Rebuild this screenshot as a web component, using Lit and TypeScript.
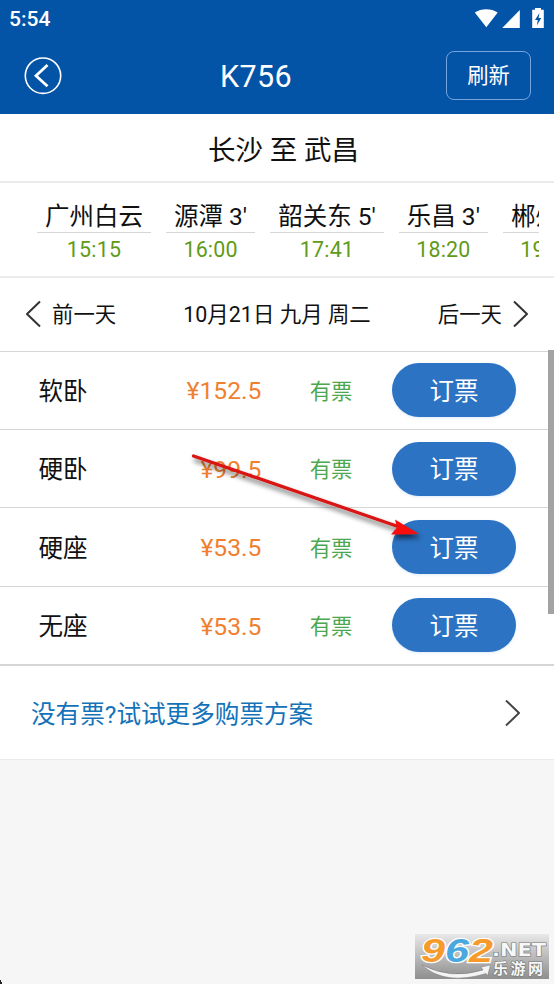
import { LitElement, html, css, svg } from "lit";
import { customElement, property } from "lit/decorators.js";

const chevron = (dir: "left" | "right") => svg`
  <path d=${dir === "left" ? "M15 1.5 L2 14 L15 26.5" : "M2 1.5 L15 14 L2 26.5"}
    fill="none" stroke="currentColor" stroke-width="2" stroke-linejoin="round"></path>`;

@customElement("seat-row")
class SeatRow extends LitElement {
  @property() name = "";
  @property() price = "";

  static styles = css`
    :host {
      box-sizing: border-box;
      height: 78.4px;
      display: grid;
      grid-template-columns: 120px 103px 91px 1fr;
      align-items: center;
      padding: 0 38px 0 38.5px;
      border-bottom: 1.5px solid #d6d6d6;
      background: #fff;
    }
    .name { font-size: 24.5px; color: #111; padding-top: 3px; }
    .price { font-size: 24.7px; color: #f08030; text-align: right; white-space: nowrap; padding-top: 2px; }
    .left { font-size: 21.4px; color: #4ca850; text-align: right; padding-top: 3px; }
    .book {
      justify-self: end;
      box-sizing: border-box;
      width: 124px;
      height: 54px;
      border: 0;
      border-radius: 27px;
      background: #2c73c3;
      color: #fff;
      font: inherit;
      font-size: 24.5px;
      padding: 3px 0 0;
      box-shadow: 0 1px 3px #2c73c326;
    }
  `;

  render() {
    return html`
      <span class="name">${this.name}</span>
      <span class="price">¥${this.price}</span>
      <span class="left">有票</span>
      <button class="book">订票</button>
    `;
  }
}

@customElement("app-root")
class AppRoot extends LitElement {
  static styles = css`
    :host {
      display: flex;
      flex-direction: column;
      position: relative;
      box-sizing: border-box;
      width: 554px;
      height: 984px;
      overflow: hidden;
      background: #f6f6f6;
      color: #111;
      font-family: Roboto, "Noto Sans CJK SC", sans-serif;
      line-height: 1.2;
    }
    .head { height: 114px; background: #0353a7; color: #fff; }
    .status { box-sizing: border-box; height: 38px; display: flex; align-items: center; justify-content: space-between; padding: 0 10px 0 9px; }
    .clock { font-size: 21px; font-weight: 500; padding-top: 2px; }
    .signals { display: block; }
    .nav { height: 76px; display: grid; grid-template-columns: 156px 1fr 156px; align-items: center; }
    .back { margin-left: 24px; display: block; }
    .title { font-size: 30.5px; letter-spacing: 0.3px; text-align: center; padding: 2px 42px 0 0; margin: 0; font-weight: 400; }
    .refresh {
      justify-self: end;
      margin: 0 23px 2px 0;
      box-sizing: border-box;
      width: 85px;
      height: 49px;
      border: 1.5px solid #76a4dc;
      border-radius: 8px;
      background: none;
      color: #fff;
      font: inherit;
      font-size: 21.3px;
      padding: 2px 0 0;
    }
    .route {
      box-sizing: border-box;
      height: 69px;
      background: #fff;
      border-bottom: 2px solid #ebebeb;
      display: flex;
      align-items: center;
      justify-content: center;
      font-size: 27.5px;
      padding: 6px 0 0 13px;
    }
    .stops { box-sizing: border-box; height: 95px; background: #fff; border-bottom: 2px solid #ebebeb; padding: 18px 15px 0 37px; }
    .track { display: flex; gap: 15px; overflow: hidden; }
    .stop { flex: none; text-align: center; }
    .place { height: 31px; line-height: 31px; padding: 0 8px; border-bottom: 1px solid #d6d6d6; font-size: 24.5px; white-space: nowrap; }
    .time { height: 32px; line-height: 33px; font-size: 21.4px; letter-spacing: 0.2px; color: #5f9b17; }
    .days {
      box-sizing: border-box;
      height: 73.5px;
      background: #fff;
      border-bottom: 1.5px solid #d6d6d6;
      display: grid;
      grid-template-columns: 120px 1fr 120px;
      align-items: center;
      padding: 0 25px;
      font-size: 21.4px;
    }
    .day { display: flex; align-items: center; gap: 10px; }
    .day span, .date { padding-top: 2px; }
    .next { justify-content: flex-end; }
    .date { text-align: center; white-space: nowrap; letter-spacing: 0.05px; }
    .more {
      box-sizing: border-box;
      height: 95px;
      background: #fff;
      border-top: 1px solid #d6d6d6;
      border-bottom: 1px solid #ebebeb;
      display: flex;
      align-items: center;
      justify-content: space-between;
      padding: 0 33px 0 31px;
      color: #1472b8;
      font-size: 24.6px;
    }
    .more span { padding-top: 4px; }
    .more .chev { color: #444; }
    .chev { display: block; color: #333; }
    .thumb { position: absolute; right: 0; top: 350px; width: 6px; height: 264px; background: #a3a3a3; }
    .pointer { position: absolute; left: 185px; top: 445px; }
    .mark { position: absolute; left: 415px; top: 934px; }
    .corner { position: absolute; left: 0; bottom: 0; }
    .digits { font: italic 700 34px "Liberation Sans", sans-serif; }
    .net { font: 700 18px "DejaVu Sans", sans-serif; }
    .site { font: 700 15px "Noto Sans CJK SC", sans-serif; }
  `;

  private stops = [
    ["广州白云", "15:15"],
    ["源潭 3'", "16:00"],
    ["韶关东 5'", "17:41"],
    ["乐昌 3'", "18:20"],
    ["郴州 3'", "19:05"],
  ];

  private seats = [
    ["软卧", "152.5"],
    ["硬卧", "99.5"],
    ["硬座", "53.5"],
    ["无座", "53.5"],
  ];

  render() {
    return html`
      <header class="head">
        <div class="status">
          <span class="clock">5:54</span>
          <svg class="signals" width="70" height="22" viewBox="0 0 70 22" fill="#fff">
            <path d="M0.8 4.5 C7 0 17.5 0 23.7 4.5 L12.3 19.3 Z"></path>
            <path d="M45.8 2 V20 H28.2 Z"></path>
            <path d="M58.5 1.8 H61 V0 H67 V1.8 H69.8 V20 H58.2 V1.8 Z"></path>
            <path d="M65.4 5 L61 12 H63.8 L62.8 17.5 L67.3 10 H64.6 Z" fill="#0353a7"></path>
          </svg>
        </div>
        <div class="nav">
          <svg class="back" width="38" height="38" viewBox="0 0 38 38" fill="none" stroke="#fff">
            <circle cx="19" cy="18.7" r="17.7" stroke-width="1.6"></circle>
            <path d="M23.5 8 L12 18.7 L23.5 29.3" stroke-width="2.8"></path>
          </svg>
          <h1 class="title">K756</h1>
          <button class="refresh">刷新</button>
        </div>
      </header>
      <div class="route">长沙 至 武昌</div>
      <div class="stops">
        <div class="track">
          ${this.stops.map(([place, time]) => html`
            <div class="stop">
              <div class="place">${place}</div>
              <div class="time">${time}</div>
            </div>`)}
        </div>
      </div>
      <div class="days">
        <div class="day">
          <svg class="chev" width="17" height="28">${chevron("left")}</svg>
          <span>前一天</span>
        </div>
        <div class="date">10月21日 九月 周二</div>
        <div class="day next">
          <span>后一天</span>
          <svg class="chev" width="17" height="28">${chevron("right")}</svg>
        </div>
      </div>
      ${this.seats.map(([name, price]) => html`<seat-row .name=${name} .price=${price}></seat-row>`)}
      <div class="more">
        <span>没有票?试试更多购票方案</span>
        <svg class="chev" width="17" height="28">${chevron("right")}</svg>
      </div>

      <div class="thumb"></div>

      <svg class="pointer" width="250" height="110" viewBox="185 445 250 110">
        <defs>
          <filter id="soft" x="-10%" y="-20%" width="120%" height="150%">
            <feDropShadow dx="2" dy="4" stdDeviation="2.5" flood-color="#000" flood-opacity="0.6"></feDropShadow>
          </filter>
        </defs>
        <g filter="url(#soft)">
          <path d="M193.5 456 L398 526.5" stroke="#d81212" stroke-width="3.2" stroke-linecap="round"></path>
          <path d="M419 534 L391 534.5 L397 527.5 L395 519.5 Z" fill="#f80c0c"></path>
        </g>
      </svg>

      <svg class="mark" width="134" height="45" viewBox="0 0 134 45">
        <defs>
          <linearGradient id="plate" x1="0" y1="0" x2="0" y2="1">
            <stop offset="0" stop-color="#e8e8e8"></stop>
            <stop offset="1" stop-color="#8e8e8e"></stop>
          </linearGradient>
        </defs>
        <rect width="134" height="45" fill="url(#plate)"></rect>
        <g class="digits" stroke="#fff" stroke-width="2.5" paint-order="stroke">
          <text x="6" y="28" textLength="24" lengthAdjust="spacingAndGlyphs" fill="#f79a2c">9</text>
          <text x="30" y="28" textLength="24" lengthAdjust="spacingAndGlyphs" fill="#4aa8e0">6</text>
          <text x="54" y="28" textLength="24" lengthAdjust="spacingAndGlyphs" fill="#f79a2c">2</text>
        </g>
        <path d="M7 31 Q36 46 68 36 L66 33 L75.5 31 L72.5 42 L71 39.5 Q30 52 7 31 Z" fill="#f4f4f4" stroke="#777" stroke-width="0.5"></path>
        <g fill="#f7f7f7" stroke="#777" stroke-width="1.2" paint-order="stroke">
          <text class="net" x="77" y="22" textLength="54" lengthAdjust="spacingAndGlyphs">.NET</text>
          <text class="site" x="78" y="40" textLength="50">乐游网</text>
        </g>
      </svg>

      <svg class="corner" width="3" height="4"><path d="M0 0 V4 H2 V2 H1 V0 Z" fill="#222"></path></svg>
    `;
  }
}
